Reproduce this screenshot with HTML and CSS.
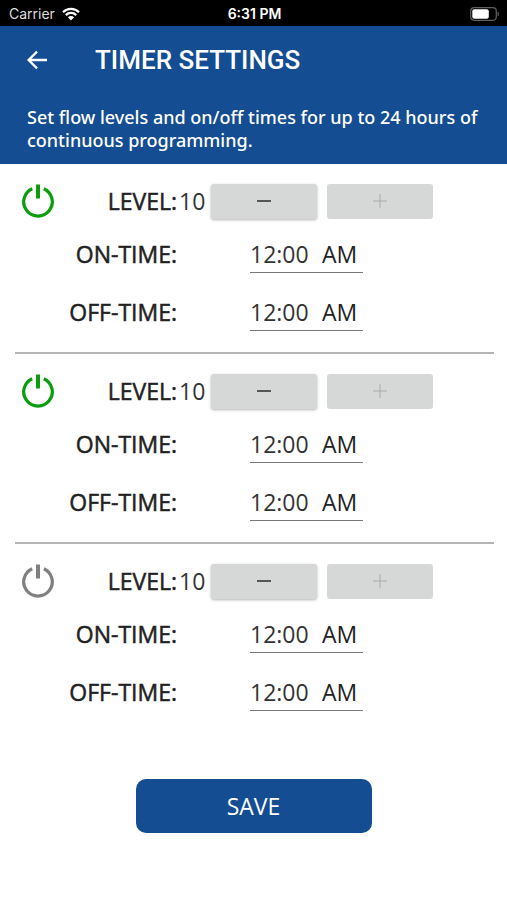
FILE: index.html
```html
<!DOCTYPE html>
<html lang="en">
<head>
<meta charset="utf-8">
<meta name="viewport" content="width=device-width, initial-scale=1">
<title>Timer Settings</title>
<link rel="stylesheet" href="styles.css">
</head>
<body>
<div class="status">
  <div class="carrier">
    <span>Carrier</span>
    <svg class="wifi" viewBox="0 0 18 14" aria-hidden="true">
      <path d="M1 5.2a11.3 11.3 0 0 1 16 0M3.8 8.1a7.4 7.4 0 0 1 10.4 0" fill="none" stroke="#fff" stroke-width="2.2"/>
      <path d="M9 13.4 5.9 10.2a4.4 4.4 0 0 1 6.2 0z" fill="#fff"/>
    </svg>
  </div>
  <span class="clock">6:31 PM</span>
  <svg class="battery" viewBox="0 0 30 14" aria-hidden="true">
    <rect x=".7" y=".7" width="25.6" height="12.6" rx="3.5" fill="none" stroke="#606060" stroke-width="1.2"/>
    <rect x="2.3" y="2.3" width="16.5" height="9.4" rx="2" fill="#fff"/>
    <path d="M27.6 4.6a2.8 2.8 0 0 1 0 4.8z" fill="#606060"/>
  </svg>
</div>
<header class="header">
  <div class="bar">
    <button class="back" type="button" aria-label="Back">
      <svg viewBox="0 0 22 20" aria-hidden="true"><path d="M21 10H2M10.5 1.2 1.7 10l8.8 8.8" fill="none" stroke="#fff" stroke-width="2.4"/></svg>
    </button>
    <h1 class="title">TIMER SETTINGS</h1>
  </div>
  <p class="intro">Set flow levels and on/off times for up to 24 hours of continuous programming.</p>
</header>
<main>
  <form>
    <section class="timer">
      <div class="row level">
        <div class="lead">
          <button class="power on" type="button" aria-label="Timer 1 power" aria-pressed="true"><svg viewBox="0 0 34 34" aria-hidden="true"><path d="M11.2 4.7a14.3 14.3 0 1 0 11.6 0" /><path class="stem" d="M17 .5v14"/></svg></button>
          <span class="name">LEVEL:</span>
        </div>
        <output class="amount">10</output>
        <button class="step" type="button" aria-label="Decrease level"><svg viewBox="0 0 14 14" aria-hidden="true"><path d="M0 7h14"/></svg></button>
        <button class="step" type="button" aria-label="Increase level" disabled><svg viewBox="0 0 14 14" aria-hidden="true"><path d="M0 7h14M7 0v14"/></svg></button>
      </div>
      <div class="row time">
        <label class="lead name" for="on1">ON-TIME:</label>
        <div class="field"><input id="on1" type="text" value="12:00"><select aria-label="On-time period"><option>AM</option><option>PM</option></select></div>
      </div>
      <div class="row time">
        <label class="lead name" for="off1">OFF-TIME:</label>
        <div class="field"><input id="off1" type="text" value="12:00"><select aria-label="Off-time period"><option>AM</option><option>PM</option></select></div>
      </div>
    </section>
    <section class="timer">
      <div class="row level">
        <div class="lead">
          <button class="power on" type="button" aria-label="Timer 2 power" aria-pressed="true"><svg viewBox="0 0 34 34" aria-hidden="true"><path d="M11.2 4.7a14.3 14.3 0 1 0 11.6 0" /><path class="stem" d="M17 .5v14"/></svg></button>
          <span class="name">LEVEL:</span>
        </div>
        <output class="amount">10</output>
        <button class="step" type="button" aria-label="Decrease level"><svg viewBox="0 0 14 14" aria-hidden="true"><path d="M0 7h14"/></svg></button>
        <button class="step" type="button" aria-label="Increase level" disabled><svg viewBox="0 0 14 14" aria-hidden="true"><path d="M0 7h14M7 0v14"/></svg></button>
      </div>
      <div class="row time">
        <label class="lead name" for="on2">ON-TIME:</label>
        <div class="field"><input id="on2" type="text" value="12:00"><select aria-label="On-time period"><option>AM</option><option>PM</option></select></div>
      </div>
      <div class="row time">
        <label class="lead name" for="off2">OFF-TIME:</label>
        <div class="field"><input id="off2" type="text" value="12:00"><select aria-label="Off-time period"><option>AM</option><option>PM</option></select></div>
      </div>
    </section>
    <section class="timer">
      <div class="row level">
        <div class="lead">
          <button class="power" type="button" aria-label="Timer 3 power" aria-pressed="false"><svg viewBox="0 0 34 34" aria-hidden="true"><path d="M11.2 4.7a14.3 14.3 0 1 0 11.6 0" /><path class="stem" d="M17 .5v14"/></svg></button>
          <span class="name">LEVEL:</span>
        </div>
        <output class="amount">10</output>
        <button class="step" type="button" aria-label="Decrease level"><svg viewBox="0 0 14 14" aria-hidden="true"><path d="M0 7h14"/></svg></button>
        <button class="step" type="button" aria-label="Increase level" disabled><svg viewBox="0 0 14 14" aria-hidden="true"><path d="M0 7h14M7 0v14"/></svg></button>
      </div>
      <div class="row time">
        <label class="lead name" for="on3">ON-TIME:</label>
        <div class="field"><input id="on3" type="text" value="12:00"><select aria-label="On-time period"><option>AM</option><option>PM</option></select></div>
      </div>
      <div class="row time">
        <label class="lead name" for="off3">OFF-TIME:</label>
        <div class="field"><input id="off3" type="text" value="12:00"><select aria-label="Off-time period"><option>AM</option><option>PM</option></select></div>
      </div>
    </section>
    <button class="save" type="button">SAVE</button>
  </form>
</main>
</body>
</html>
```
FILE: styles.css
```css
* { box-sizing: border-box; }
body {
  margin: 0;
  background: #fff;
  color: #222;
  font-family: "Open Sans", sans-serif;
}
button, input, select {
  margin: 0;
  padding: 0;
  border: 0;
  background: none;
  color: inherit;
  font: inherit;
}
svg { display: block; }

.status {
  display: grid;
  grid-template-columns: 1fr auto 1fr;
  align-items: center;
  height: 26px;
  padding: 1px 7px 0 9px;
  background: #000;
  color: #fff;
  font: 14px/20px Inter, sans-serif;
}
.carrier { display: flex; align-items: center; gap: 7px; color: #ddd; }
.wifi { width: 18px; height: 14px; }
.clock { font-weight: 600; }
.battery { width: 30px; height: 14px; justify-self: end; }

.header {
  padding: 10px 20px 12px 27px;
  background: #144d91;
  color: #fff;
}
.bar { display: flex; align-items: center; gap: 47px; height: 48px; }
.back svg { width: 21px; height: 20px; }
.title { margin: 0; font: 500 26px/32px Roboto, sans-serif; }
.intro {
  margin: 22px 0 0;
  font-family: "Noto Sans", "Open Sans", sans-serif;
  font-size: 18px;
  font-weight: 500;
  line-height: 23px;
}

.timer {
  margin: 0 13px 0 15px;
  padding: 19px 0 21px;
  border-bottom: 2px solid #b4b4b4;
}
.timer:last-of-type { border-bottom: 0; }
.row { display: flex; align-items: center; }
.level { height: 36px; margin-bottom: 16px; }
.time { height: 38px; }
.time + .time { margin-top: 20px; }
.lead { display: flex; flex: none; align-items: center; justify-content: space-between; width: 162px; padding-left: 6px; }
.time .lead { justify-content: flex-end; }
.name {
  font-size: 23px;
  line-height: 32px;
  -webkit-text-stroke: 0.5px currentColor;
}
.amount { width: 34px; padding-left: 2px; font-size: 23px; line-height: 32px; color: #333; }
.power svg { width: 34px; height: 34px; fill: none; stroke: #808080; stroke-width: 3.2; }
.power .stem { stroke-width: 4; }
.power.on svg { stroke: #0b9d0b; }
.step {
  display: flex;
  align-items: center;
  justify-content: center;
  width: 106px;
  height: 35px;
  border-radius: 3px;
  background: #d6d8d7;
  box-shadow: 0 1px 3px rgba(0, 0, 0, .3);
}
.step + .step { margin-left: 10px; }
.step svg { width: 14px; height: 14px; stroke: #555; stroke-width: 2; }
.step:disabled { box-shadow: none; }
.step:disabled svg { stroke: #aaa; stroke-width: 1; }
.field {
  display: flex;
  align-items: center;
  width: 113px;
  height: 38px;
  margin-left: 73px;
  border-bottom: 1px solid #777;
  font-size: 23px;
  color: #333;
}
.field input { width: 72px; height: 32px; }
.field select { width: 41px; height: 32px; appearance: none; color: #222; }

.save {
  display: block;
  width: 236px;
  height: 54px;
  margin: 47px auto 0;
  border-radius: 10px;
  background: #144d91;
  color: #fff;
  font-size: 23px;
}
```
